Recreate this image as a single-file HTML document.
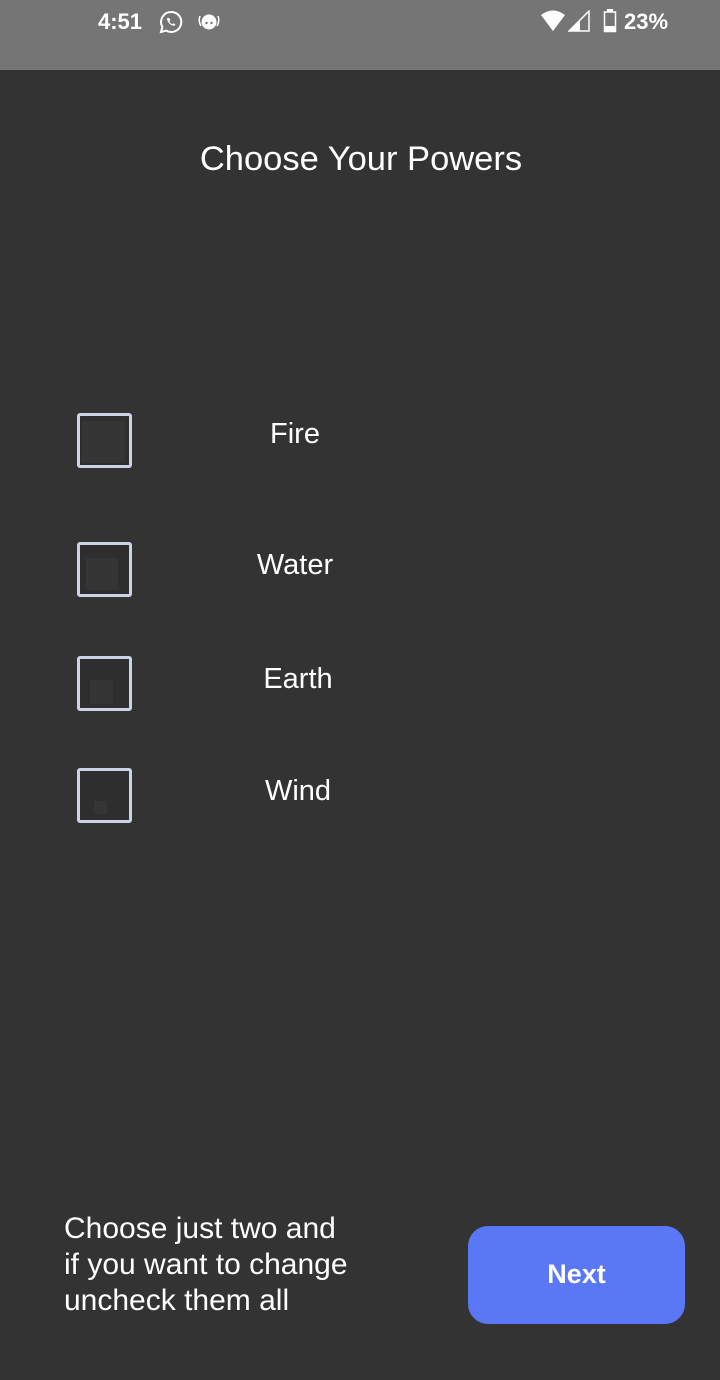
<!DOCTYPE html>
<html><head><meta charset="utf-8"><style>
body{margin:0;width:720px;height:1380px;background:#333333;font-family:"Liberation Sans",sans-serif;position:relative;overflow:hidden;color:#fff}
.sb{position:absolute;top:0;left:0;width:720px;height:70px;background:#757575}
.t{position:absolute;font-weight:bold;font-size:22px;top:9px}
h1{position:absolute;top:140px;left:0;width:722px;text-align:center;font-weight:normal;font-size:34.5px;margin:0}
.cb{position:absolute;left:77px;width:55px;height:55px;border:3px solid #cdd3e6;border-radius:3px;background:#2e2e2e;box-sizing:border-box}
.cb i{position:absolute;background:#353535}
.lbl{position:absolute;font-size:29px;width:200px;text-align:center;left:198px}
.msg{position:absolute;left:64px;top:1211px;font-size:30px;line-height:36px}
.btn{position:absolute;left:468px;top:1226px;width:217px;height:98px;background:#5a78f6;border-radius:20px;text-align:center;line-height:96px;font-size:27px;font-weight:bold}
</style></head><body>
<div class="sb">
<span class="t" style="left:98px">4:51</span>
<svg style="position:absolute;left:158px;top:9px" width="26" height="26" viewBox="0 0 26 26"><path d="M13 3a10 10 0 0 0-8.6 15L3 23l5.2-1.4A10 10 0 1 0 13 3z" fill="none" stroke="#fff" stroke-width="2"/><path d="M9 9c0 4 3 7 7 8l1.5-1.8-2.2-1-1 1c-1.3-.6-2.5-1.8-3-3l1-1-1-2.2z" fill="#fff"/></svg>
<svg style="position:absolute;left:196px;top:8px" width="26" height="26" viewBox="0 0 26 26"><path d="M4 8Q2 13 5 18M22 8Q24 13 21 18" fill="none" stroke="#fff" stroke-width="1.5"/><circle cx="13" cy="14" r="7.5" fill="#fff"/><circle cx="10.5" cy="15" r="1.2" fill="#757575"/><circle cx="15.5" cy="15" r="1.2" fill="#757575"/></svg>
<svg style="position:absolute;left:540px;top:10px" width="26" height="22" viewBox="0 0 26 22"><path d="M1 5Q13-4 25 5L13 21z" fill="#fff"/></svg>
<svg style="position:absolute;left:568px;top:10px" width="22" height="22" viewBox="0 0 22 22"><path d="M21 1V21H1z" fill="none" stroke="#fff" stroke-width="1.5"/><path d="M12 10V21H1z" fill="#fff"/></svg>
<svg style="position:absolute;left:603px;top:9px" width="14" height="24" viewBox="0 0 14 24"><rect x="4" y="0" width="6" height="3" fill="#fff"/><rect x="1.5" y="3" width="11" height="19.5" fill="none" stroke="#fff" stroke-width="1.5"/><rect x="2" y="17" width="10" height="5" fill="#fff"/></svg>
<span class="t" style="left:624px">23%</span>
</div>
<h1>Choose Your Powers</h1>
<div class="cb" style="top:413px"><i style="left:2px;top:5px;width:43px;height:42px"></i></div>
<div class="cb" style="top:542px"><i style="left:6px;top:13px;width:32px;height:32px"></i></div>
<div class="cb" style="top:656px"><i style="left:10px;top:21px;width:23px;height:24px"></i></div>
<div class="cb" style="top:768px"><i style="left:14px;top:30px;width:13px;height:13px"></i></div>
<div class="lbl" style="top:418px;left:195px">Fire</div>
<div class="lbl" style="top:549px;left:195px">Water</div>
<div class="lbl" style="top:663px">Earth</div>
<div class="lbl" style="top:775px">Wind</div>
<div class="msg">Choose just two and<br>if you want to change<br>uncheck them all</div>
<div class="btn">Next</div>
</body></html>
